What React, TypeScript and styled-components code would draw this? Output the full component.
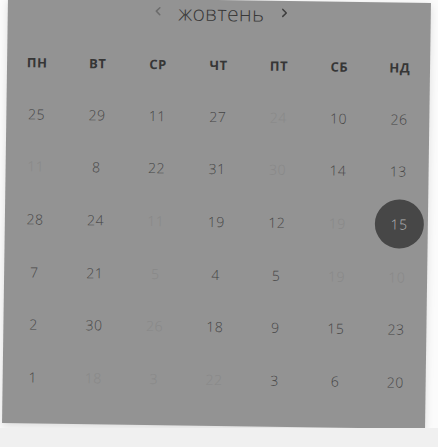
import React from "react";
import styled, { createGlobalStyle } from "styled-components";

const GlobalStyle = createGlobalStyle`
  html, body {
    margin: 0;
    padding: 0;
    background: #f0f0f0;
    font-family: "Open Sans", "Noto Sans", sans-serif;
  }
  * { box-sizing: border-box; }
`;

const Stage = styled.div`
  width: 438px;
  height: 428px;
  background: #fbfbfb;
  overflow: hidden;
  padding-left: 4.5px;
`;

const Panel = styled.div`
  width: 423px;
  height: 426px;
  background: #939393;
  transform: rotate(0.8deg);
  box-shadow: 0 3px 8px rgba(0, 0, 0, 0.12);
  display: flex;
  flex-direction: column;
`;

const Header = styled.div`
  height: 26px;
  display: flex;
  align-items: center;
  justify-content: center;
  gap: 17px;
  padding-left: 4px;
`;

const Month = styled.span`
  font-size: 21px;
  font-weight: 300;
  line-height: 26px;
  color: #383838;
  letter-spacing: 0.3px;
`;

const Chevron = styled.svg<{ $dim?: boolean }>`
  width: 8px;
  height: 12px;
  margin-top: -3px;
  stroke: ${(p) => (p.$dim ? "#6c6c6c" : "#3e3e3e")};
  fill: none;
  stroke-width: 1.5;
  stroke-linecap: round;
  stroke-linejoin: round;
`;

const Weekdays = styled.div`
  display: grid;
  grid-template-columns: repeat(7, 1fr);
  height: 20px;
  margin-top: 29px;
  align-items: center;
`;

const Weekday = styled.div`
  text-align: center;
  font-size: 13px;
  font-weight: 700;
  color: #363636;
  letter-spacing: 0.6px;
`;

const Grid = styled.div`
  display: grid;
  grid-template-columns: repeat(7, 1fr);
  grid-auto-rows: 52.7px;
  margin-top: 14.7px;
`;

const Cell = styled.div`
  display: flex;
  align-items: center;
  justify-content: center;
`;

const SelectedCell = styled(Cell)`
  padding-left: 3px;
`;

const Day = styled.span<{ $muted?: boolean; $selected?: boolean }>`
  display: flex;
  align-items: center;
  justify-content: center;
  width: 49px;
  height: 49px;
  border-radius: 50%;
  font-size: 14px;
  font-weight: 300;
  letter-spacing: 0.5px;
  color: ${(p) => (p.$selected ? "#b4b4b4" : p.$muted ? "#888888" : "#454545")};
  background: ${(p) => (p.$selected ? "#474747" : "transparent")};
`;

type D = { n: number; m?: boolean; s?: boolean };

const weekdays = ["ПН", "ВТ", "СР", "ЧТ", "ПТ", "СБ", "НД"];

const rows: D[][] = [
  [{ n: 25 }, { n: 29 }, { n: 11 }, { n: 27 }, { n: 24, m: true }, { n: 10 }, { n: 26 }],
  [{ n: 11, m: true }, { n: 8 }, { n: 22 }, { n: 31 }, { n: 30, m: true }, { n: 14 }, { n: 13 }],
  [{ n: 28 }, { n: 24 }, { n: 11, m: true }, { n: 19 }, { n: 12 }, { n: 19, m: true }, { n: 15, s: true }],
  [{ n: 7 }, { n: 21 }, { n: 5, m: true }, { n: 4 }, { n: 5 }, { n: 19, m: true }, { n: 10, m: true }],
  [{ n: 2 }, { n: 30 }, { n: 26, m: true }, { n: 18 }, { n: 9 }, { n: 15 }, { n: 23 }],
  [{ n: 1 }, { n: 18, m: true }, { n: 3, m: true }, { n: 22, m: true }, { n: 3 }, { n: 6 }, { n: 20 }],
];

export default function App() {
  return (
    <>
      <GlobalStyle />
      <Stage>
        <Panel>
          <Header>
            <Chevron $dim viewBox="0 0 8 12">
              <path d="M6 2.5 L2.5 6 L6 9.5" />
            </Chevron>
            <Month>жовтень</Month>
            <Chevron viewBox="0 0 8 12">
              <path d="M2 2.5 L5.5 6 L2 9.5" />
            </Chevron>
          </Header>
          <Weekdays>
            {weekdays.map((w) => (
              <Weekday key={w}>{w}</Weekday>
            ))}
          </Weekdays>
          <Grid>
            {rows.flat().map((d, i) =>
              d.s ? (
                <SelectedCell key={i}>
                  <Day $selected>{d.n}</Day>
                </SelectedCell>
              ) : (
                <Cell key={i}>
                  <Day $muted={d.m}>{d.n}</Day>
                </Cell>
              )
            )}
          </Grid>
        </Panel>
      </Stage>
    </>
  );
}
